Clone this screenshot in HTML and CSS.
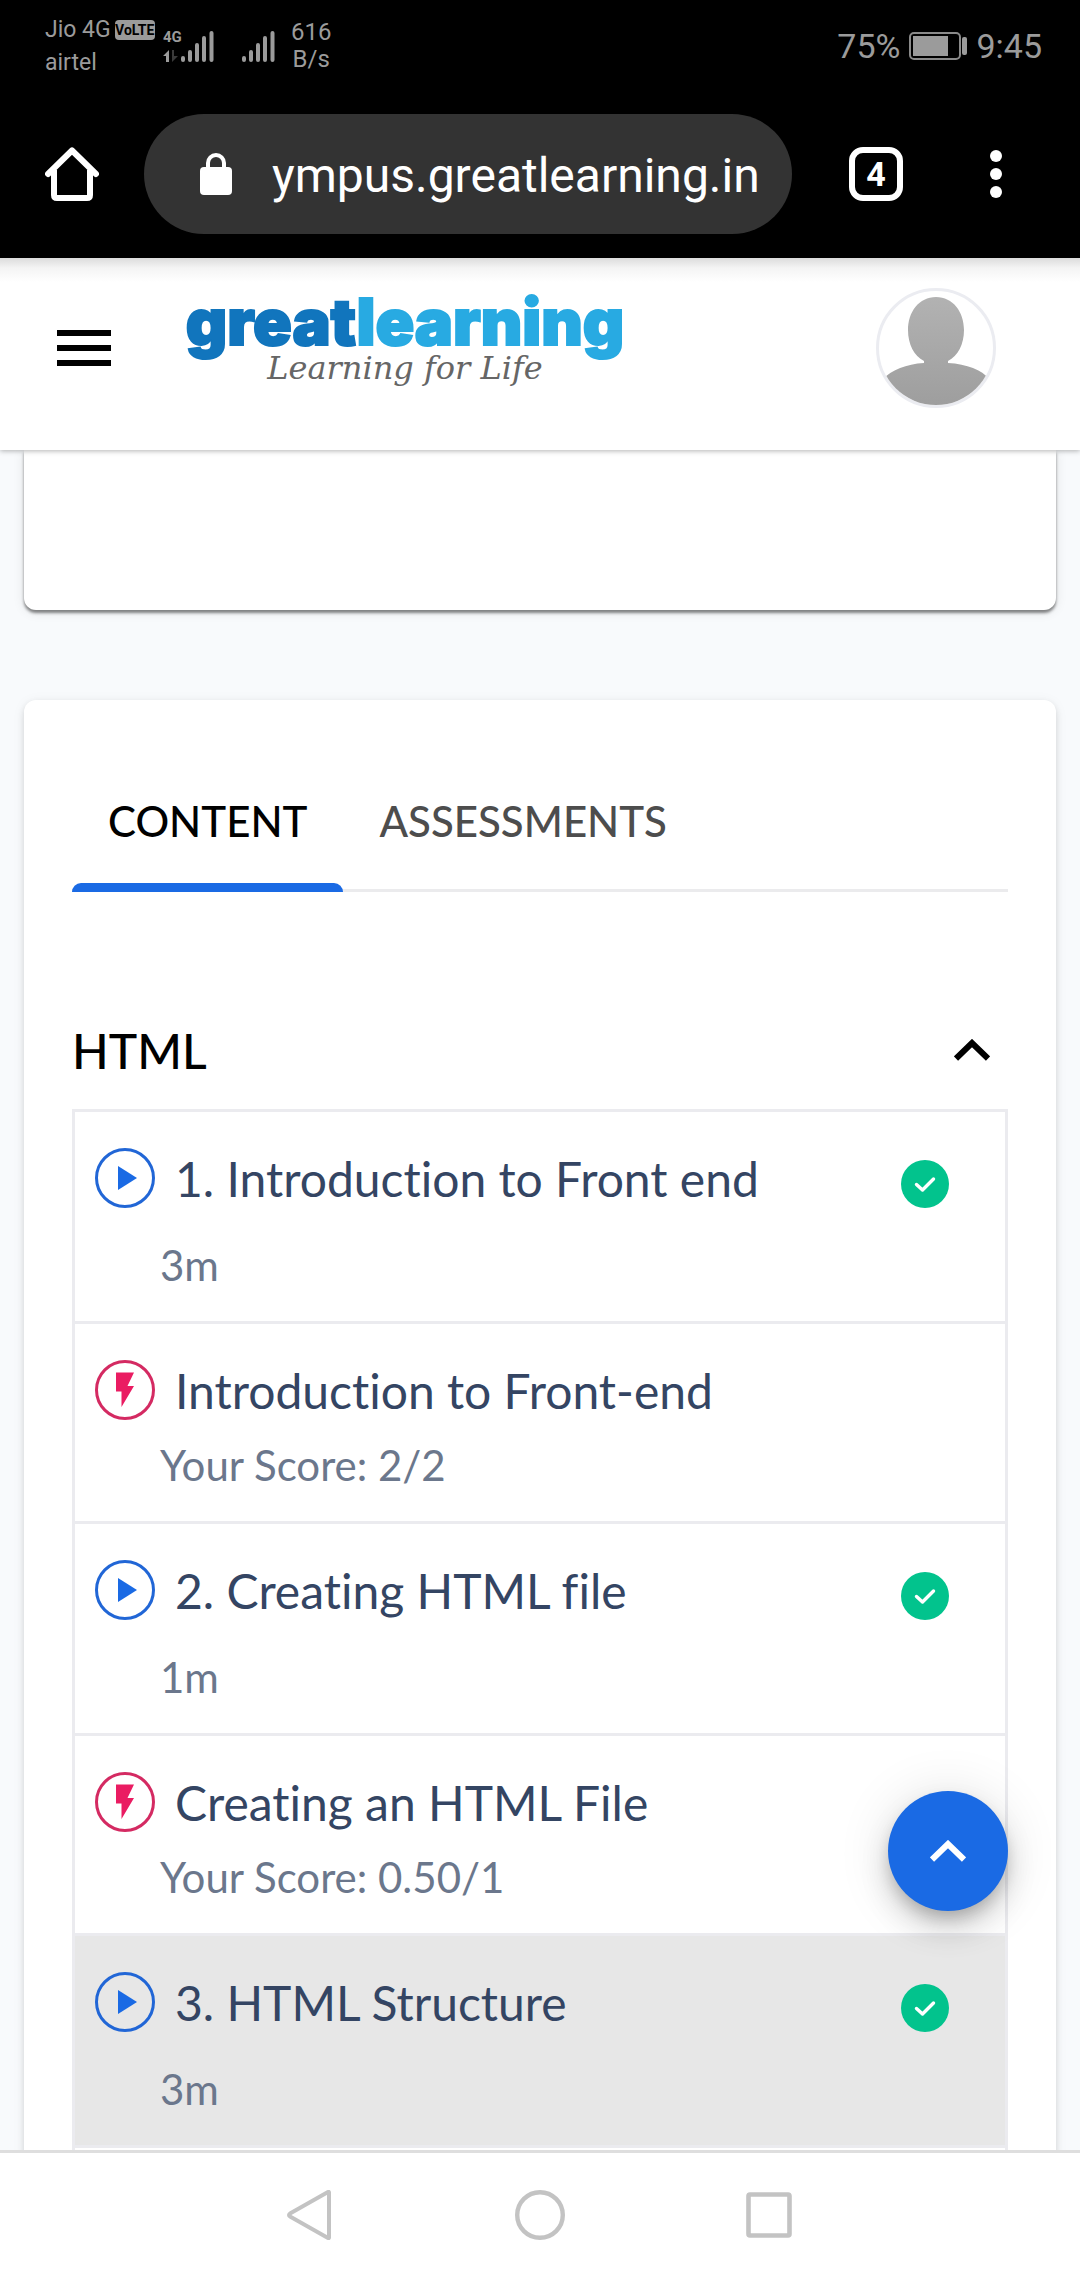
FILE: index.html
```html
<!DOCTYPE html>
<html lang="en">
<head>
<meta charset="utf-8">
<meta name="viewport" content="width=device-width, initial-scale=1">
<title>Great Learning</title>
<link rel="stylesheet" href="styles.css">
</head>
<body>
<svg class="defs" aria-hidden="true">
  <symbol id="play" viewBox="0 0 60 60"><circle cx="30" cy="30" r="28.5" fill="none" stroke="#2166d6" stroke-width="3"/><path d="M23 18v24l19-12z" fill="#1a6ae4"/></symbol>
  <symbol id="bolt" viewBox="0 0 60 60"><circle cx="30" cy="30" r="28.5" fill="none" stroke="#d42a62" stroke-width="3"/><path d="M21 12.500h18l-6.500 13.500h6.500l-12.500 21v-15.500h-5.500z" fill="#ea1c62"/></symbol>
  <symbol id="check" viewBox="0 0 48 48"><circle cx="24" cy="24" r="24" fill="#02c38d"/><path d="M15.500 24.500l6 5.500 11-11" fill="none" stroke="#fff" stroke-width="3.400" stroke-linecap="round" stroke-linejoin="round"/></symbol>
  <symbol id="chevron" viewBox="0 0 36 22"><path d="M2 19.500l16-15.500 16 15.500" fill="none" stroke="currentColor" stroke-width="6"/></symbol>
  <symbol id="signal" viewBox="0 0 33 31"><path d="M2 27v2M9 21v8M16 14v15M23 7v22M30.500 2v27" fill="none" stroke="#9b9b9b" stroke-width="4" stroke-linecap="round"/></symbol>
</svg>

<div class="status">
  <div class="carriers">
    <div class="carrier">Jio 4G <span class="volte">VoLTE</span></div>
    <div class="carrier">airtel</div>
  </div>
  <div class="network">
    <div class="network-type">
      <span>4G</span>
      <svg width="16" height="12" viewBox="0 0 16 12"><path d="M0 6l6-6v12H3V6z" fill="#9b9b9b"/><path d="M9 0h2v6h4l-6 6z" fill="#3a3a3a"/></svg>
    </div>
    <svg width="33" height="31"><use href="#signal"/></svg>
  </div>
  <svg class="signal-two" width="33" height="31"><use href="#signal"/></svg>
  <div class="speed">616<br>B/s</div>
  <div class="power">
    <span>75%</span>
    <svg width="58" height="28" viewBox="0 0 58 28"><rect x="1" y="1" width="50" height="26" rx="4" fill="none" stroke="#8a8a8a" stroke-width="2"/><rect x="4" y="4" width="35" height="20" fill="#9b9b9b"/><rect x="53" y="5" width="5" height="18" rx="2" fill="#9b9b9b"/></svg>
    <span>9:45</span>
  </div>
</div>

<div class="toolbar">
  <button class="icon-button" aria-label="Home"><svg width="54" height="54" viewBox="0 0 54 54"><path d="M3 27L27 3.500 51 27" fill="none" stroke="#fff" stroke-width="6" stroke-linecap="round" stroke-linejoin="round"/><path d="M9 23v25q0 3 3 3h30q3 0 3-3v-25" fill="none" stroke="#fff" stroke-width="6"/></svg></button>
  <div class="address">
    <svg width="32" height="42" viewBox="0 0 32 42"><rect y="14" width="32" height="28" rx="4" fill="#fff"/><path d="M8 16v-6a8 8 0 0 1 16 0v6" fill="none" stroke="#fff" stroke-width="4"/></svg>
    <input class="url" type="text" value="ympus.greatlearning.in" aria-label="Address">
  </div>
  <button class="tabs-count" aria-label="Open tabs">4</button>
  <button class="icon-button" aria-label="More"><svg width="12" height="48" viewBox="0 0 12 48"><circle cx="6" cy="6" r="6" fill="#fff"/><circle cx="6" cy="24" r="6" fill="#fff"/><circle cx="6" cy="42" r="6" fill="#fff"/></svg></button>
</div>

<header class="site-header">
  <button class="icon-button" aria-label="Menu"><svg width="54" height="36" viewBox="0 0 54 36"><path d="M0 3h54M0 18h54M0 33h54" stroke="#000" stroke-width="6"/></svg></button>
  <a class="logo" href="#">
    <span class="wordmark"><span class="great">great</span><span class="learning">learning</span></span>
    <span class="tagline">Learning for Life</span>
  </a>
  <button class="avatar" aria-label="Profile"><svg width="114" height="114" viewBox="0 0 114 114"><defs><linearGradient id="grey" x1="0" y1="0" x2="0" y2="1"><stop offset="0" stop-color="#b2b2b2"/><stop offset="1" stop-color="#9e9e9e"/></linearGradient></defs><path d="M57 6c17 0 28 15 28 33 0 14-6 26-16 31v2c19 1 34 7 41 16v26H4V88c9-9 23-15 41-16v-2C35 65 29 53 29 39 29 21 40 6 57 6z" fill="url(#grey)"/></svg></button>
</header>

<main class="content">
  <section class="card card-end"></section>
  <section class="card card-main">
    <div class="tabs" role="tablist">
      <button class="tab tab-active" role="tab" aria-selected="true">CONTENT</button>
      <button class="tab" role="tab" aria-selected="false">ASSESSMENTS</button>
    </div>
    <button class="section-toggle" aria-expanded="true"><span>HTML</span><svg width="36" height="22"><use href="#chevron"/></svg></button>
    <ul class="lessons">
      <li class="lesson video">
        <svg class="kind"><use href="#play"/></svg>
        <a class="title" href="#">1. Introduction to Front end</a>
        <svg class="done"><use href="#check"/></svg>
        <p class="meta">3m</p>
      </li>
      <li class="lesson">
        <svg class="kind"><use href="#bolt"/></svg>
        <a class="title" href="#">Introduction to Front-end</a>
        <p class="meta">Your Score: 2/2</p>
      </li>
      <li class="lesson video">
        <svg class="kind"><use href="#play"/></svg>
        <a class="title" href="#">2. Creating HTML file</a>
        <svg class="done"><use href="#check"/></svg>
        <p class="meta">1m</p>
      </li>
      <li class="lesson">
        <svg class="kind"><use href="#bolt"/></svg>
        <a class="title" href="#">Creating an HTML File</a>
        <p class="meta">Your Score: 0.50/1</p>
      </li>
      <li class="lesson video current">
        <svg class="kind"><use href="#play"/></svg>
        <a class="title" href="#">3. HTML Structure</a>
        <svg class="done"><use href="#check"/></svg>
        <p class="meta">3m</p>
      </li>
    </ul>
  </section>
  <button class="to-top" aria-label="Back to top"><svg width="36" height="22"><use href="#chevron"/></svg></button>
</main>

<nav class="system-nav">
  <button class="icon-button" aria-label="Back"><svg width="50" height="50" viewBox="0 0 50 50"><path d="M43 2.500v45q0 1-1 .5L4 26.500q-2-1.500 0-3L42 2q1-.5 1 .5z" fill="none" stroke="#c3c3c3" stroke-width="4" stroke-linejoin="round"/></svg></button>
  <button class="icon-button" aria-label="Home screen"><svg width="50" height="50" viewBox="0 0 50 50"><circle cx="25" cy="25" r="22.800" fill="none" stroke="#c3c3c3" stroke-width="4.400"/></svg></button>
  <button class="icon-button" aria-label="Recent apps"><svg width="50" height="50" viewBox="0 0 50 50"><rect x="4.500" y="4.500" width="41" height="41" rx="1.500" fill="none" stroke="#c3c3c3" stroke-width="4.600"/></svg></button>
</nav>
</body>
</html>
```
FILE: styles.css
```css
* {
  box-sizing: border-box;
}

body {
  margin: 0;
  height: 100vh;
  display: flex;
  flex-direction: column;
  overflow: hidden;
  background: #f8fafc;
  font-family: Lato, sans-serif;
  font-variant-ligatures: none;
}

button {
  padding: 0;
  border: 0;
  background: none;
  font: inherit;
  color: inherit;
}

svg {
  display: block;
  flex: none;
}

.defs {
  position: absolute;
  width: 0;
  height: 0;
}

.icon-button {
  display: flex;
  flex: none;
}

/* Phone status bar */
.status {
  flex: none;
  height: 90px;
  padding: 0 38px 0 45px;
  display: flex;
  background: #000;
  color: #9b9b9b;
  font-family: Roboto, sans-serif;
  font-size: 24px;
}

.carriers {
  width: 118px;
  padding-top: 13px;
  white-space: nowrap;
}

.carrier {
  display: flex;
  align-items: center;
  gap: 4px;
  height: 33px;
  font-size: 23px;
}

.volte {
  width: 40px;
  border-radius: 4px;
  background: #9b9b9b;
  color: #000;
  font-size: 14px;
  font-weight: 700;
  line-height: 20px;
  text-align: center;
}

.network {
  display: flex;
  padding-top: 31px;
  width: 79px;
}

.network-type {
  width: 18px;
  font-size: 15px;
  font-weight: 700;
  line-height: 13px;
}

.network-type svg {
  margin-top: 6px;
}

.signal-two {
  margin-top: 31px;
}

.speed {
  margin-left: 16px;
  padding-top: 19px;
  line-height: 27px;
  text-align: center;
}

.power {
  display: flex;
  align-items: center;
  gap: 9px;
  margin-left: auto;
  padding-top: 2px;
  font-size: 34px;
}

/* Browser toolbar */
.toolbar {
  flex: none;
  height: 168px;
  padding: 24px 78px 24px 45px;
  display: flex;
  align-items: center;
  background: #000;
  color: #fff;
  font-family: Roboto, sans-serif;
}

.address {
  flex: 1;
  min-width: 0;
  height: 120px;
  margin: 0 57px 0 45px;
  padding: 0 24px 0 56px;
  display: flex;
  align-items: center;
  gap: 40px;
  border-radius: 60px;
  background: #333;
}

.url {
  flex: 1;
  min-width: 0;
  padding: 2px 0 0;
  border: 0;
  background: none;
  color: #fff;
  font-family: inherit;
  font-size: 48px;
}

.tabs-count {
  width: 54px;
  height: 54px;
  margin-right: 87px;
  border: 6px solid #fff;
  border-radius: 14px;
  font-size: 34px;
  font-weight: 700;
  line-height: 42px;
}

/* Site header */
.site-header {
  position: relative;
  z-index: 1;
  flex: none;
  height: 192px;
  padding: 0 84px 0 57px;
  display: flex;
  align-items: center;
  background: linear-gradient(#dcdcdc, #f4f4f4 10px, #fff 24px);
  box-shadow: 0 1px 5px rgba(0, 0, 0, 0.3);
}

.site-header .icon-button {
  margin-top: -12px;
}

.logo {
  width: 450px;
  height: 124px;
  margin-left: 69px;
  display: flex;
  flex-direction: column;
  align-items: center;
  text-decoration: none;
}

.wordmark {
  font-family: Inter, sans-serif;
  font-size: 64px;
  font-weight: 900;
  line-height: 60px;
  white-space: nowrap;
  paint-order: stroke fill;
  stroke-linejoin: round;
  -webkit-text-stroke: 2px currentColor;
}

.great {
  color: #1175bd;
}

.learning {
  color: #28aae2;
}

.tagline {
  color: #666;
  font-family: "DejaVu Serif", serif;
  font-size: 32px;
  font-style: italic;
  line-height: 32px;
  white-space: nowrap;
}

.avatar {
  width: 120px;
  height: 120px;
  margin: 0 0 12px auto;
  border: 3px solid #ebecf1;
  border-radius: 50%;
  overflow: hidden;
}

/* Page content */
.content {
  position: relative;
  flex: 1;
  min-height: 0;
  overflow: hidden;
  padding: 0 24px;
}

.card {
  border-radius: 12px;
  background: #fff;
  box-shadow: 0 3px 6px rgba(0, 0, 0, 0.12), 0 2px 14px rgba(0, 0, 0, 0.06);
}

.card-end {
  height: 160px;
  border-radius: 0 0 12px 12px;
  box-shadow: 0 3px 3px rgba(0, 0, 0, 0.45), 0 2px 12px rgba(0, 0, 0, 0.1);
}

.card-main {
  margin-top: 90px;
  padding: 60px 48px 0;
}

.tabs {
  height: 132px;
  display: flex;
  border-bottom: 3px solid #ebebed;
}

.tab {
  position: relative;
  height: 132px;
  padding: 0 36px 11px;
  color: #4d4d4d;
  font-size: 42px;
  font-weight: 500;
}

.tab-active {
  color: #000;
}

.tab-active::after {
  content: "";
  position: absolute;
  right: 0;
  bottom: 0;
  left: 0;
  height: 9px;
  border-radius: 9px 9px 0 0;
  background: #1a6ae4;
}

.section-toggle {
  width: 100%;
  height: 118px;
  margin-top: 99px;
  padding: 0 18px 0 0;
  display: flex;
  align-items: center;
  justify-content: space-between;
  font-size: 48px;
  font-weight: 500;
}

.lessons {
  margin: 0;
  padding: 0 0 60px;
  border: 3px solid #ebebef;
  border-bottom: 0;
  list-style: none;
}

.lesson {
  display: grid;
  grid-template-columns: 60px 1fr 48px;
  grid-template-rows: 62px auto;
  column-gap: 20px;
  padding: 36px 56px 29px 20px;
  border-bottom: 3px solid #ebebef;
}

.kind {
  width: 60px;
  height: 60px;
}

.title {
  color: #344563;
  font-size: 48px;
  line-height: 62px;
  text-decoration: none;
  white-space: nowrap;
}

.done {
  width: 48px;
  height: 48px;
  margin-top: 12px;
}

.meta {
  grid-column: 1 / -1;
  margin: 16px 0 0;
  padding-left: 65px;
  color: #6b778c;
  font-size: 42px;
  line-height: 54px;
}

.video .meta {
  margin-top: 28px;
}

.current {
  background: #e7e7e7;
}

.to-top {
  position: absolute;
  right: 72px;
  bottom: 239px;
  width: 120px;
  height: 120px;
  display: flex;
  align-items: center;
  justify-content: center;
  border-radius: 50%;
  background: #1a6ae4;
  color: #fff;
  box-shadow: 0 9px 15px -3px rgba(0, 0, 0, 0.2), 0 18px 30px rgba(0, 0, 0, 0.14), 0 3px 54px rgba(0, 0, 0, 0.12);
}

/* System navigation */
.system-nav {
  flex: none;
  height: 130px;
  padding-bottom: 3px;
  display: flex;
  justify-content: center;
  align-items: center;
  gap: 179px;
  border-top: 3px solid #dedede;
  background: #fff;
}
```
